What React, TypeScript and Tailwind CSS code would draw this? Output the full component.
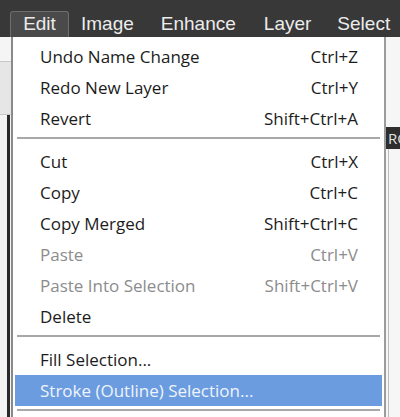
import React from "react";

type Item =
  | { sep: true }
  | { label: string; shortcut?: string; disabled?: boolean; active?: boolean };

const items: Item[] = [
  { label: "Undo Name Change", shortcut: "Ctrl+Z" },
  { label: "Redo New Layer", shortcut: "Ctrl+Y" },
  { label: "Revert", shortcut: "Shift+Ctrl+A" },
  { sep: true },
  { label: "Cut", shortcut: "Ctrl+X" },
  { label: "Copy", shortcut: "Ctrl+C" },
  { label: "Copy Merged", shortcut: "Shift+Ctrl+C" },
  { label: "Paste", shortcut: "Ctrl+V", disabled: true },
  { label: "Paste Into Selection", shortcut: "Shift+Ctrl+V", disabled: true },
  { label: "Delete" },
  { sep: true },
  { label: "Fill Selection..." },
  { label: "Stroke (Outline) Selection...", active: true },
  { sep: true },
];

export default function App() {
  return (
    <div className="relative w-[400px] h-[417px] overflow-hidden bg-[#f1f1f1]" style={{ fontFamily: '"Open Sans", "Noto Sans", sans-serif' }}>
      {/* Menu bar */}
      <div className="h-[37px] bg-[#383838] flex items-end pl-[10px] text-[19px] text-[#ececec]" style={{ fontFamily: '"Liberation Sans", Arial, sans-serif' }}>
        <div className="h-[26px] w-[59px] flex items-center justify-center bg-[#4a4a4a] border border-b-0 border-[#6e6e6e] rounded-t-[3px] leading-none pb-[2px]">Edit</div>
        <div className="flex items-center h-[26px] leading-none pb-[2px]">
          <span className="ml-[12px]">Image</span>
          <span className="ml-[27px]">Enhance</span>
          <span className="ml-[28px]">Layer</span>
          <span className="ml-[26px]">Select</span>
        </div>
      </div>

      {/* Workspace background */}
      <div className="flex h-[380px]">
        <div className="w-[12px] flex flex-col">
          <div className="h-[24px] bg-[#f5f5f5]" />
          <div className="h-px bg-[#c8c8c8]" />
          <div className="h-[52px] bg-[#e6e6e6]" />
          <div className="h-px bg-[#c8c8c8]" />
          <div className="flex-1 flex bg-[#f4f4f4]">
            <div className="w-[7px]" />
            <div className="w-[3px] bg-[#2a2a2a]" />
          </div>
        </div>
        <div className="flex-1" />
        <div className="w-[14px] flex flex-col bg-[#f6f6f6]">
          <div className="h-[90px]" />
          <div className="h-[22px] bg-[#2e2e2e] text-[#e0e0e0] text-[15px] leading-[22px] pl-[2px] overflow-hidden whitespace-nowrap">RO</div>
          <div className="flex-1 border-l border-[#bdbdbd] ml-[2px]" />
        </div>
      </div>

      {/* Dropdown */}
      <div className="absolute left-[11px] top-[37px] w-[375px] h-[390px] bg-white border-l-[2px] border-[#8a8a8a] border-r-[2px] border-r-[#9c9c9c] pt-[4px]">
        {items.map((it, i) =>
          "sep" in it ? (
            <div key={i} className="mt-[3px] mb-[7px] mx-[4px] h-[2px] bg-[#a8a8a8]" />
          ) : (
            <div
              key={i}
              className={
                "h-[31px] flex items-center justify-between text-[17px] pl-[25px] pr-[24px] mx-[2px] " +
                (it.active ? "bg-[#6b9ce0] text-[#eef4fc]" : it.disabled ? "text-[#8c8c8c]" : "text-[#1c1c1c]")
              }
            >
              <span>{it.label}</span>
              {it.shortcut && <span>{it.shortcut}</span>}
            </div>
          )
        )}
      </div>
    </div>
  );
}
